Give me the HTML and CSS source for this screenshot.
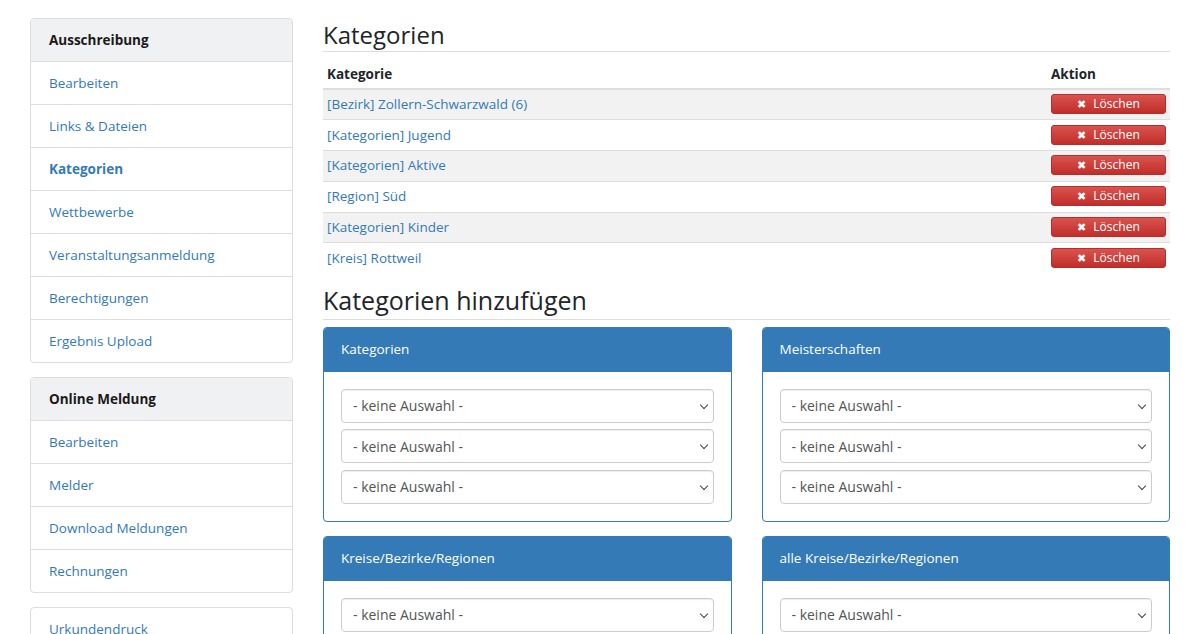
FILE: index.html
```html
<!DOCTYPE html>
<html lang="de">
<head>
<meta charset="utf-8">
<title>Kategorien</title>
<link rel="stylesheet" href="styles.css">
</head>
<body>
<div class="page">
  <aside class="sidebar">
    <div class="list-panel">
      <div class="list-head">Ausschreibung</div>
      <a class="list-item" href="#">Bearbeiten</a>
      <a class="list-item" href="#">Links &amp; Dateien</a>
      <a class="list-item active" href="#">Kategorien</a>
      <a class="list-item" href="#">Wettbewerbe</a>
      <a class="list-item" href="#">Veranstaltungsanmeldung</a>
      <a class="list-item" href="#">Berechtigungen</a>
      <a class="list-item" href="#">Ergebnis Upload</a>
    </div>
    <div class="list-panel">
      <div class="list-head">Online Meldung</div>
      <a class="list-item" href="#">Bearbeiten</a>
      <a class="list-item" href="#">Melder</a>
      <a class="list-item" href="#">Download Meldungen</a>
      <a class="list-item" href="#">Rechnungen</a>
    </div>
    <div class="list-panel">
      <a class="list-item" href="#">Urkundendruck</a>
    </div>
  </aside>
  <main class="content">
    <h3 class="page-head">Kategorien</h3>
    <table class="cat-table">
      <thead>
        <tr><th>Kategorie</th><th class="col-action">Aktion</th></tr>
      </thead>
      <tbody>
        <tr><td><a href="#">[Bezirk] Zollern-Schwarzwald (6)</a></td><td class="col-action"><button class="btn-del"><span class="x">&#10006;</span> Löschen</button></td></tr>
        <tr><td><a href="#">[Kategorien] Jugend</a></td><td class="col-action"><button class="btn-del"><span class="x">&#10006;</span> Löschen</button></td></tr>
        <tr><td><a href="#">[Kategorien] Aktive</a></td><td class="col-action"><button class="btn-del"><span class="x">&#10006;</span> Löschen</button></td></tr>
        <tr><td><a href="#">[Region] Süd</a></td><td class="col-action"><button class="btn-del"><span class="x">&#10006;</span> Löschen</button></td></tr>
        <tr><td><a href="#">[Kategorien] Kinder</a></td><td class="col-action"><button class="btn-del"><span class="x">&#10006;</span> Löschen</button></td></tr>
        <tr><td><a href="#">[Kreis] Rottweil</a></td><td class="col-action"><button class="btn-del"><span class="x">&#10006;</span> Löschen</button></td></tr>
      </tbody>
    </table>
    <h2 class="page-head second">Kategorien hinzufügen</h2>
    <div class="panel-grid">
      <div class="panel">
        <div class="panel-heading">Kategorien</div>
        <div class="panel-body">
          <div class="sel-wrap"><select class="sel"><option>- keine Auswahl -</option></select></div>
          <div class="sel-wrap"><select class="sel"><option>- keine Auswahl -</option></select></div>
          <div class="sel-wrap"><select class="sel"><option>- keine Auswahl -</option></select></div>
        </div>
      </div>
      <div class="panel">
        <div class="panel-heading">Meisterschaften</div>
        <div class="panel-body">
          <div class="sel-wrap"><select class="sel"><option>- keine Auswahl -</option></select></div>
          <div class="sel-wrap"><select class="sel"><option>- keine Auswahl -</option></select></div>
          <div class="sel-wrap"><select class="sel"><option>- keine Auswahl -</option></select></div>
        </div>
      </div>
      <div class="panel">
        <div class="panel-heading">Kreise/Bezirke/Regionen</div>
        <div class="panel-body">
          <div class="sel-wrap"><select class="sel"><option>- keine Auswahl -</option></select></div>
          <div class="sel-wrap"><select class="sel"><option>- keine Auswahl -</option></select></div>
        </div>
      </div>
      <div class="panel">
        <div class="panel-heading">alle Kreise/Bezirke/Regionen</div>
        <div class="panel-body">
          <div class="sel-wrap"><select class="sel"><option>- keine Auswahl -</option></select></div>
          <div class="sel-wrap"><select class="sel"><option>- keine Auswahl -</option></select></div>
        </div>
      </div>
    </div>
  </main>
</div>
</body>
</html>
```
FILE: styles.css
```css
* { box-sizing: border-box; }
html, body { margin: 0; padding: 0; background: #fff; }
body {
  font-family: "Open Sans", "Noto Sans", sans-serif;
  font-size: 13.5px;
  line-height: 20px;
  color: #212529;
}
a { color: #337ab7; text-decoration: none; }
.page {
  display: flex;
  gap: 30px;
  padding: 18px 23px 0 30px;
}
.sidebar {
  width: 263px;
  flex: none;
  display: flex;
  flex-direction: column;
  gap: 14px;
}
.list-panel {
  border: 1px solid #ddd;
  border-radius: 4px;
  overflow: hidden;
}
.list-head {
  background: #f0f1f3;
  font-weight: 700;
  padding: 11px 18px;
  height: 43px;
  border-bottom: 1px solid #ddd;
  color: #1a1a1a;
}
.list-item {
  display: block;
  padding: 11px 18px;
  height: 43px;
  border-bottom: 1px solid #ddd;
}
.list-item:last-child { border-bottom: 0; height: 42px; }
.list-item.active { font-weight: 700; }
.content { flex: 1; min-width: 0; }
.page-head {
  margin: 0;
  font-size: 24px;
  font-weight: 400;
  line-height: 32px;
  padding-top: 1px;
  border-bottom: 1px solid #ddd;
  color: #212529;
}
.page-head.second {
  margin-top: 12px;
  font-size: 25px;
  line-height: 28px;
  padding-top: 0;
  padding-bottom: 5px;
}
.cat-table {
  width: 100%;
  border-collapse: collapse;
  margin-top: 8px;
}
.cat-table th {
  text-align: left;
  font-weight: 700;
  padding: 4px 4px 4px;
  border-bottom: 2px solid #ddd;
}
.cat-table td {
  padding: 4px 4px 5px 4px;
  border-top: 1px solid #ddd;
  height: 30.8px;
}
.cat-table tbody tr:nth-child(odd) td { background: #f2f2f2; }
.col-action { width: 123px; }
.btn-del {
  display: block;
  width: 115px;
  height: 20px;
  padding: 0 5px;
  border: 1px solid #b92c28;
  border-radius: 3px;
  background: linear-gradient(#d9534f, #c12e2a);
  color: #fff;
  font-family: inherit;
  font-size: 12px;
  line-height: 18px;
  text-align: center;
  cursor: pointer;
}
.btn-del .x { font-size: 11px; margin-right: 4px; }
.panel-grid {
  display: grid;
  grid-template-columns: 1fr 1fr;
  column-gap: 30px;
  row-gap: 14px;
  margin-top: 7px;
}
.panel {
  border: 1px solid #337ab7;
  border-radius: 4px;
  overflow: hidden;
}
.panel-heading {
  background: #337ab7;
  color: #fff;
  padding: 11px 17px;
  height: 44px;
}
.panel-body {
  padding: 17px 17px 17px;
  display: flex;
  flex-direction: column;
  gap: 6.5px;
}
.sel-wrap { position: relative; }
.sel-wrap::after {
  content: "";
  position: absolute;
  right: 7px;
  top: 13px;
  width: 5px;
  height: 5px;
  border-right: 1.5px solid #444;
  border-bottom: 1.5px solid #444;
  transform: rotate(45deg);
  pointer-events: none;
}
.sel {
  display: block;
  width: 100%;
  height: 34px;
  border: 1px solid #ccc;
  border-radius: 4px;
  background: #fff;
  color: #555;
  font-family: inherit;
  font-size: 14px;
  padding: 0 11px;
  box-shadow: inset 0 1px 1px rgba(0,0,0,.075);
  appearance: none;
  -webkit-appearance: none;
}
```
